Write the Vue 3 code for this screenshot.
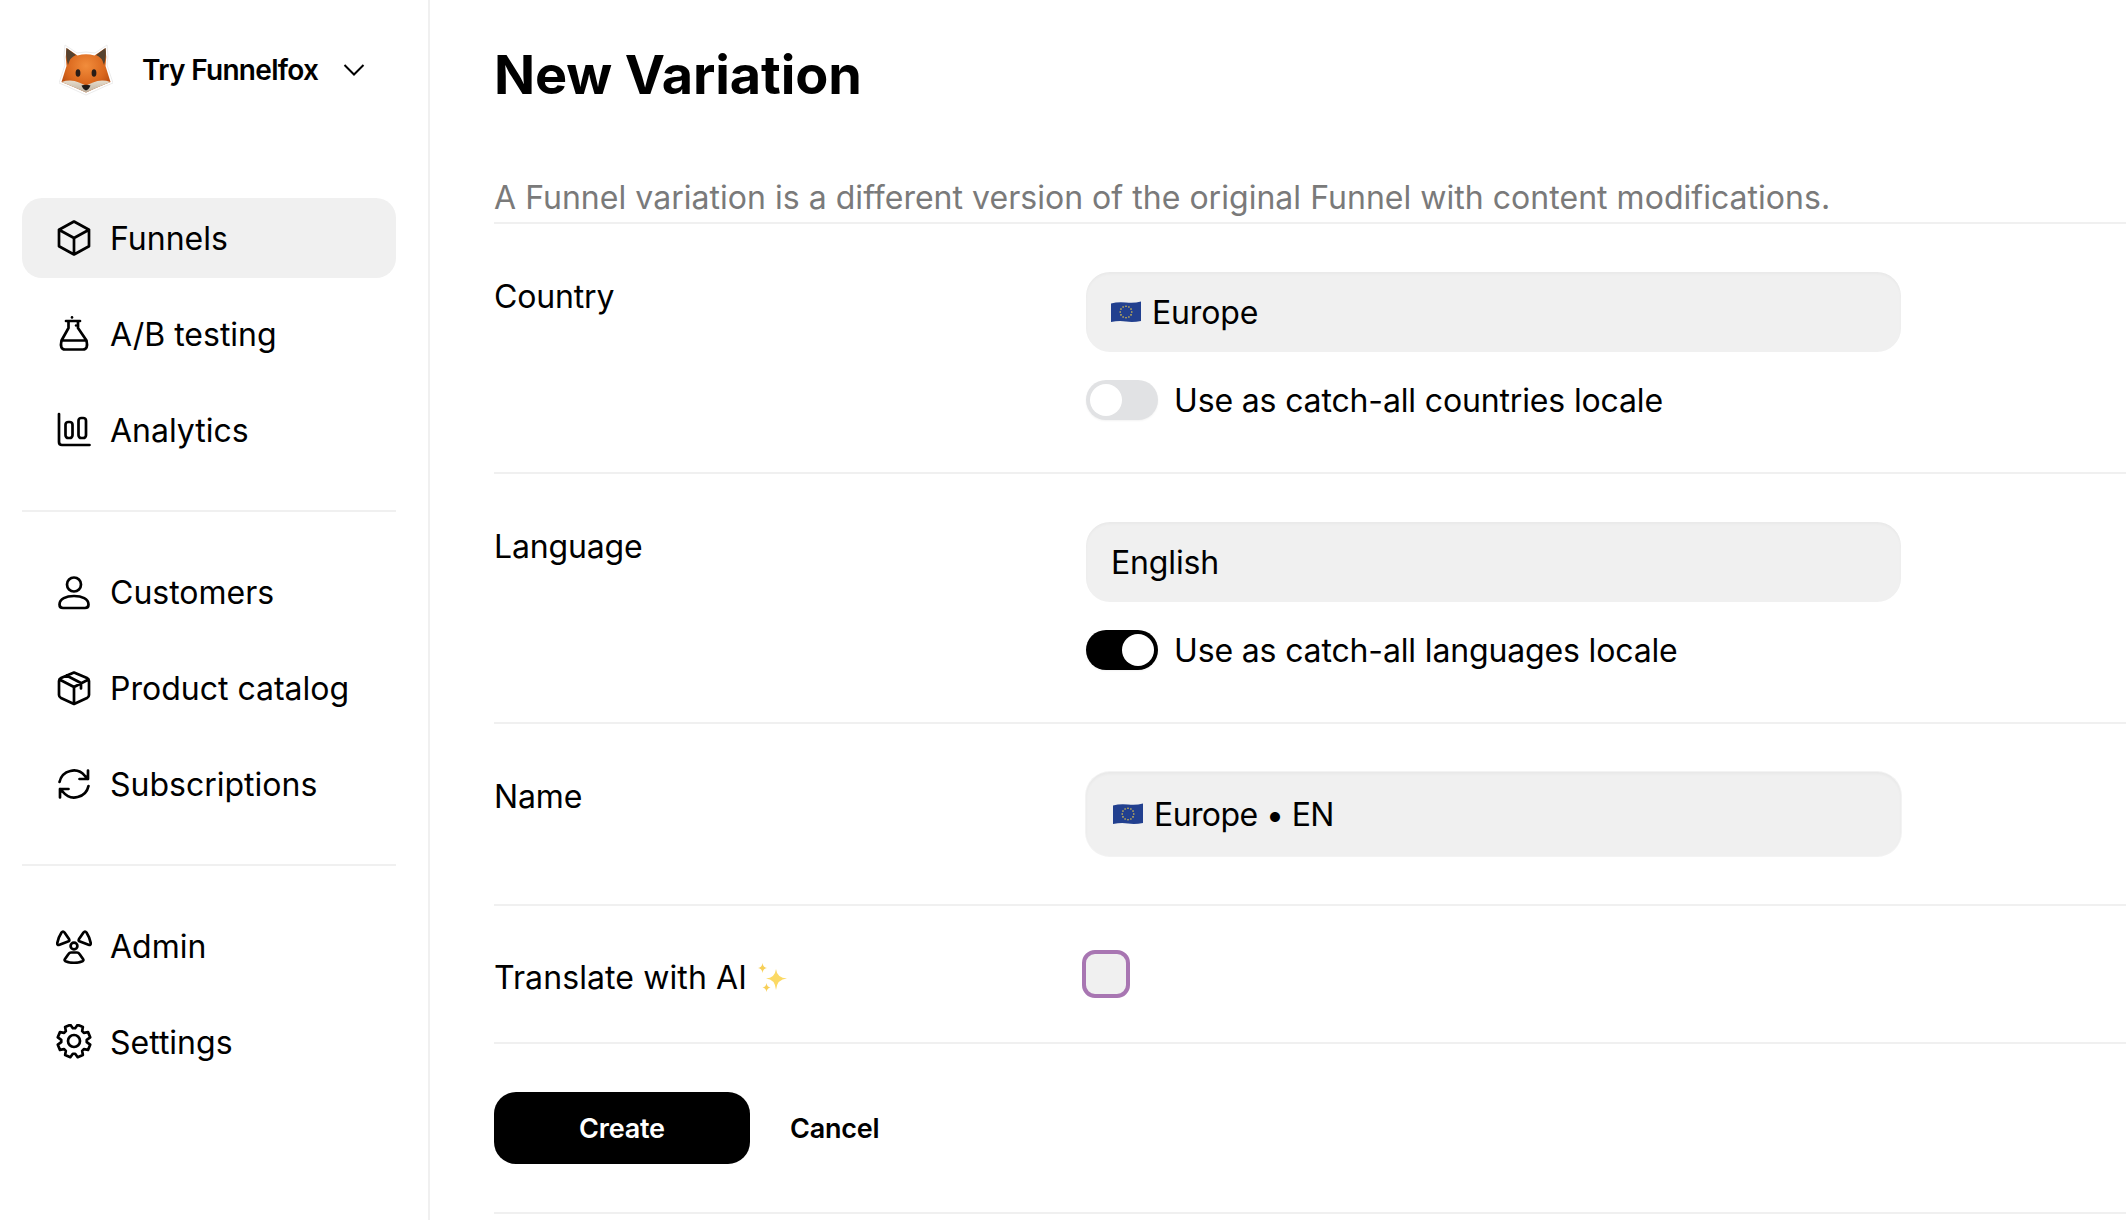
<script setup>
const flagStars = Array.from({ length: 12 }, (_, i) => {
  const a = (i * Math.PI) / 6
  return { x: (15 + 5.8 * Math.cos(a)).toFixed(2), y: (11 + 5.8 * Math.sin(a)).toFixed(2) }
})

function gearPath() {
  const pts = []
  for (let i = 0; i < 8; i++) {
    const c = (i * Math.PI) / 4 + Math.PI / 8
    for (const [r, d] of [[12.8, -0.3], [16.6, -0.17], [16.6, 0.17], [12.8, 0.3]]) {
      const a = c + d
      pts.push(`${(18 + r * Math.cos(a)).toFixed(2)} ${(17 + r * Math.sin(a)).toFixed(2)}`)
    }
  }
  return 'M' + pts.join('L') + 'Z'
}
const gear = gearPath()

const groups = [
  [
    { label: 'Funnels', icon: 'cube', active: true },
    { label: 'A/B testing', icon: 'flask' },
    { label: 'Analytics', icon: 'chart' },
  ],
  [
    { label: 'Customers', icon: 'user' },
    { label: 'Product catalog', icon: 'box' },
    { label: 'Subscriptions', icon: 'sync' },
  ],
  [
    { label: 'Admin', icon: 'radiation' },
    { label: 'Settings', icon: 'gear' },
  ],
]
</script>

<template>
  <div class="page">
    <aside class="sidebar">
      <div class="brand">
        <svg class="fox" viewBox="0 0 54 52" width="54" height="52">
          <defs>
            <radialGradient id="foxFace" cx="50%" cy="40%" r="58%">
              <stop offset="0%" stop-color="#f28d3c" />
              <stop offset="70%" stop-color="#d9661c" />
              <stop offset="100%" stop-color="#bb4f12" />
            </radialGradient>
            <linearGradient id="foxChin" x1="0" y1="0" x2="0" y2="1">
              <stop offset="0%" stop-color="#e6dccc" />
              <stop offset="100%" stop-color="#bdb1a0" />
            </linearGradient>
          </defs>
          <path d="M6 1 L18 9 Q27 7 36 9 L48 1 Q50 12 48 21 L54 39 Q44 43 38 46 L27 51 L16 46 Q10 43 0 39 L6 21 Q4 12 6 1 Z" fill="#fff" stroke="#ececec" stroke-width="1" />
          <path d="M7.5 4 L18.5 11.5 Q27 9 35.5 11.5 L46.5 4 Q48 13 46.5 22 L51.5 38 Q44 41 37 44 L27 48.5 L17 44 Q10 41 2.5 38 L7.5 22 Q6 13 7.5 4 Z" fill="url(#foxFace)" />
          <path d="M7.5 4 L17 11 Q11 13 9 21 Q6.3 12 7.5 4 Z M46.5 4 L37 11 Q43 13 45 21 Q47.7 12 46.5 4 Z" fill="#55422f" />
          <path d="M2.5 38 Q12 35 20 38.5 L27 41.5 L34 38.5 Q42 35 51.5 38 Q44 41 37 44 L27 48.5 L17 44 Q10 41 2.5 38 Z" fill="url(#foxChin)" />
          <ellipse cx="19" cy="29" rx="2.4" ry="3.8" fill="#2a1c16" />
          <ellipse cx="35" cy="29" rx="2.4" ry="3.8" fill="#2a1c16" />
          <path d="M22.5 41.5 Q27 40 31.5 41.5 Q30 45.5 27 46.5 Q24 45.5 22.5 41.5 Z" fill="#1f1a18" />
        </svg>
        <span class="brand-name">Try Funnelfox</span>
        <svg class="chevron" viewBox="0 0 22 14" width="22" height="14">
          <path d="M1.5 2 L11 11.5 L20.5 2" fill="none" stroke="#000" stroke-width="2" />
        </svg>
      </div>

      <nav class="nav">
        <div v-for="(group, g) in groups" :key="g" class="group">
          <a v-for="item in group" :key="item.label" class="item" :class="{ active: item.active }">
            <svg class="icon" viewBox="0 0 36 36" width="36" height="36">
              <g v-if="item.icon === 'cube'">
                <path d="M18 1.5 L33 9.7 V26.3 L18 34.5 L3 26.3 V9.7 Z M3 9.7 L18 18 L33 9.7 M18 18 V34.5" />
              </g>
              <g v-else-if="item.icon === 'flask'">
                <path d="M10 5 H24 M12.5 5 V12 L5.5 24.5 Q3.5 33.5 9 33.5 H27 Q32.5 33.5 30.5 24.5 L22 12 V5 M5.5 24.5 H30.5" />
                <circle cx="16" cy="1.4" r="1.3" class="dot" />
                <circle cx="20" cy="9.5" r="1.2" class="dot" />
              </g>
              <g v-else-if="item.icon === 'chart'">
                <path d="M3 2 V30 Q3 33 6 33 H33.5" />
                <rect x="9.5" y="10" width="7" height="16" rx="2.8" />
                <rect x="22.5" y="6" width="7.5" height="20" rx="2.8" />
              </g>
              <g v-else-if="item.icon === 'user'">
                <circle cx="18" cy="10.5" r="7" />
                <path d="M7 34 Q3.5 34 3.5 30.5 C3.5 25 10 22 18 22 C26 22 32.5 25 32.5 30.5 Q32.5 34 29 34 Z" />
              </g>
              <g v-else-if="item.icon === 'box'">
                <path d="M18 2.5 L31 8 Q33 9 33 11 V25 Q33 27 31 28 L18 34 L5 28 Q3 27 3 25 V11 Q3 9 5 8 Z M3.5 9.5 L18 17 L32.5 9.5 M18 17 V34 M10.5 5.5 L25 13 V18.5" />
              </g>
              <g v-else-if="item.icon === 'sync'">
                <path d="M3.5 16 A14.5 14.5 0 0 1 29 10 L32 13 M32 4.5 V13 H23.5 M32.5 20 A14.5 14.5 0 0 1 7 26 L4 23 M4 31.5 V23 H12.5" />
              </g>
              <g v-else-if="item.icon === 'radiation'">
                <circle cx="18" cy="18" r="3.4" />
                <path d="M5.5 4.5 Q7 2.5 8.5 4.5 L13 11 Q14 13 12 13.5 L3.5 16.8 Q1 17.5 1.3 15 Q2.5 9 5.5 4.5 Z" />
                <path d="M30.5 4.5 Q29 2.5 27.5 4.5 L23 11 Q22 13 24 13.5 L32.5 16.8 Q35 17.5 34.7 15 Q33.5 9 30.5 4.5 Z" />
                <path d="M15 24.5 H21 Q22.5 24.5 23.5 26 L27 31 Q28 32.5 26.5 33.2 Q18 36.5 9.5 33.2 Q8 32.5 9 31 L12.5 26 Q13.5 24.5 15 24.5 Z" />
              </g>
              <g v-else-if="item.icon === 'gear'">
                <path :d="gear" />
                <circle cx="18" cy="17" r="6" />
              </g>
            </svg>
            <span class="item-label">{{ item.label }}</span>
          </a>
        </div>
      </nav>
    </aside>

    <main class="main">
      <header class="head">
        <h1 class="title">New Variation</h1>
        <p class="desc">A Funnel variation is a different version of the original Funnel with content modifications.</p>
      </header>

      <section class="row">
        <label class="label">Country</label>
        <div class="control">
          <div class="field">
            <svg class="flag" viewBox="0 0 30 22" width="30" height="22">
              <path d="M0 2.5 Q7 0.5 15 1.5 T30 0.5 V20 Q22 21.5 15 20.5 T0 21 Z" fill="#22408f" />
              <circle v-for="(s, i) in flagStars" :key="i" :cx="s.x" :cy="s.y" r="0.8" fill="#e8c94a" />
            </svg>
            <span>Europe</span>
          </div>
          <div class="toggle-row">
            <span class="toggle"><span class="knob"></span></span>
            <span>Use as catch-all countries locale</span>
          </div>
        </div>
      </section>

      <section class="row">
        <label class="label">Language</label>
        <div class="control">
          <div class="field"><span>English</span></div>
          <div class="toggle-row">
            <span class="toggle on"><span class="knob"></span></span>
            <span>Use as catch-all languages locale</span>
          </div>
        </div>
      </section>

      <section class="row row-name">
        <label class="label">Name</label>
        <div class="control">
          <div class="field field-name">
            <svg class="flag" viewBox="0 0 30 22" width="30" height="22">
              <path d="M0 2.5 Q7 0.5 15 1.5 T30 0.5 V20 Q22 21.5 15 20.5 T0 21 Z" fill="#22408f" />
              <circle v-for="(s, i) in flagStars" :key="i" :cx="s.x" :cy="s.y" r="0.8" fill="#e8c94a" />
            </svg>
            <span>Europe • EN</span>
          </div>
        </div>
      </section>

      <section class="row row-ai">
        <label class="label ai-label">
          Translate with AI
          <svg class="sparkles" viewBox="0 0 30 30" width="30" height="30">
            <path d="M18 6 Q19 15 29 15.5 Q19 16 18 27 Q17 16 8 15.5 Q17 15 18 6 Z" fill="#fbd964" />
            <path d="M4.5 0 Q5 4.5 9 5 Q5 5.5 4.5 10 Q4 5.5 0 5 Q4 4.5 4.5 0 Z" fill="#f7cf57" />
            <path d="M8.5 20 Q9 24 12.5 24.5 Q9 25 8.5 29 Q8 25 4.5 24.5 Q8 24 8.5 20 Z" fill="#f7cf57" />
          </svg>
        </label>
        <div class="control">
          <span class="checkbox"></span>
        </div>
      </section>

      <section class="actions">
        <button class="create" type="button">Create</button>
        <button class="cancel" type="button">Cancel</button>
      </section>
    </main>
  </div>
</template>

<style>
html, body { margin: 0; background: #fff; overflow: hidden; }
</style>

<style scoped>
.page {
  display: flex;
  height: 1220px;
  font-family: Inter, "Noto Sans", sans-serif;
  color: #000;
  overflow: hidden;
}
.sidebar {
  width: 428px;
  flex: none;
  border-right: 2px solid #f0f0f0;
}
.brand {
  display: flex;
  align-items: center;
  height: 140px;
  padding-left: 59px;
}
.fox { margin-right: 29px; flex: none; }
.brand-name { font-size: 28px; font-weight: 600; letter-spacing: -0.7px; }
.chevron { margin-left: 25px; }
.nav { margin: 58px 32px 0 22px; }
.group { display: flex; flex-direction: column; gap: 16px; padding-bottom: 40px; border-bottom: 2px solid #f0f0f0; margin-bottom: 40px; }
.group:last-child { border-bottom: 0; }
.item {
  display: flex;
  align-items: center;
  height: 80px;
  padding-left: 34px;
  border-radius: 20px;
  font-size: 32px;
  letter-spacing: 0;
}
.item.active { background: #f0f0f0; }
.icon { flex: none; margin-right: 18px; fill: none; stroke: #000; stroke-width: 2.7; stroke-linejoin: round; stroke-linecap: round; }
.icon .dot { fill: #000; stroke: none; }
.main { flex: 1; min-width: 0; padding-left: 64px; }
.head { height: 222px; }
.title { margin: 0; padding-top: 40px; font-size: 54px; line-height: 70px; font-weight: 700; letter-spacing: -0.12px; }
.desc { margin: 0; padding-top: 63px; font-size: 32px; line-height: 50px; color: #7a7a7a; letter-spacing: 0.03px; white-space: nowrap; }
.row {
  display: flex;
  border-top: 2px solid #f0f0f0;
  padding: 48px 0 52px;
  font-size: 32px;
  letter-spacing: -0.15px;
}
.label { width: 592px; flex: none; line-height: 50px; }
.control { width: 815px; }
.field {
  display: flex;
  align-items: center;
  height: 80px;
  box-sizing: border-box;
  padding-left: 25px;
  gap: 11px;
  border-radius: 24px;
  background: #f0f0f0;
  box-shadow: inset 0 2px 3px rgba(0, 0, 0, 0.03);
}
.flag { flex: none; }
.field-name { height: 84px; padding-left: 27px; letter-spacing: -0.6px; box-shadow: inset 0 2px 3px rgba(0, 0, 0, 0.035), 0 0 0 1px #f3f3f3; }
.toggle-row { display: flex; align-items: center; gap: 16px; margin-top: 28px; height: 40px; }
.toggle { display: flex; align-items: center; width: 72px; height: 40px; padding: 4px; box-sizing: border-box; border-radius: 20px; background: #e1e2e4; box-shadow: 0 1px 2px rgba(0, 0, 0, 0.05); }
.toggle.on { background: #000; justify-content: flex-end; }
.knob { width: 32px; height: 32px; border-radius: 50%; background: #fff; }
.row-name { padding: 48px 0 48px; }
.row-ai { padding: 44px 0 44px; align-items: flex-start; }
.ai-label { display: flex; align-items: center; gap: 11px; box-sizing: border-box; height: 48px; padding-top: 8px; line-height: 40px; letter-spacing: 0.1px; }
.sparkles { flex: none; }
.checkbox {
  display: block;
  width: 48px;
  height: 48px;
  box-sizing: border-box;
  margin-left: -4px;
  border: 4.5px solid #a876b2;
  border-radius: 13px;
  background: #f0f0f0;
}
.actions {
  display: flex;
  align-items: center;
  gap: 40px;
  border-top: 2px solid #f0f0f0;
  border-bottom: 2px solid #f0f0f0;
  padding: 48px 0 48px;
}
.create {
  width: 256px;
  height: 72px;
  border: 0;
  border-radius: 22px;
  background: #000;
  color: #fff;
  font: 600 27px Inter, "Noto Sans", sans-serif;
  letter-spacing: -0.2px;
}
.cancel {
  border: 0;
  padding: 0;
  background: none;
  color: #000;
  font: 600 27px Inter, "Noto Sans", sans-serif;
  letter-spacing: -0.2px;
}
</style>
